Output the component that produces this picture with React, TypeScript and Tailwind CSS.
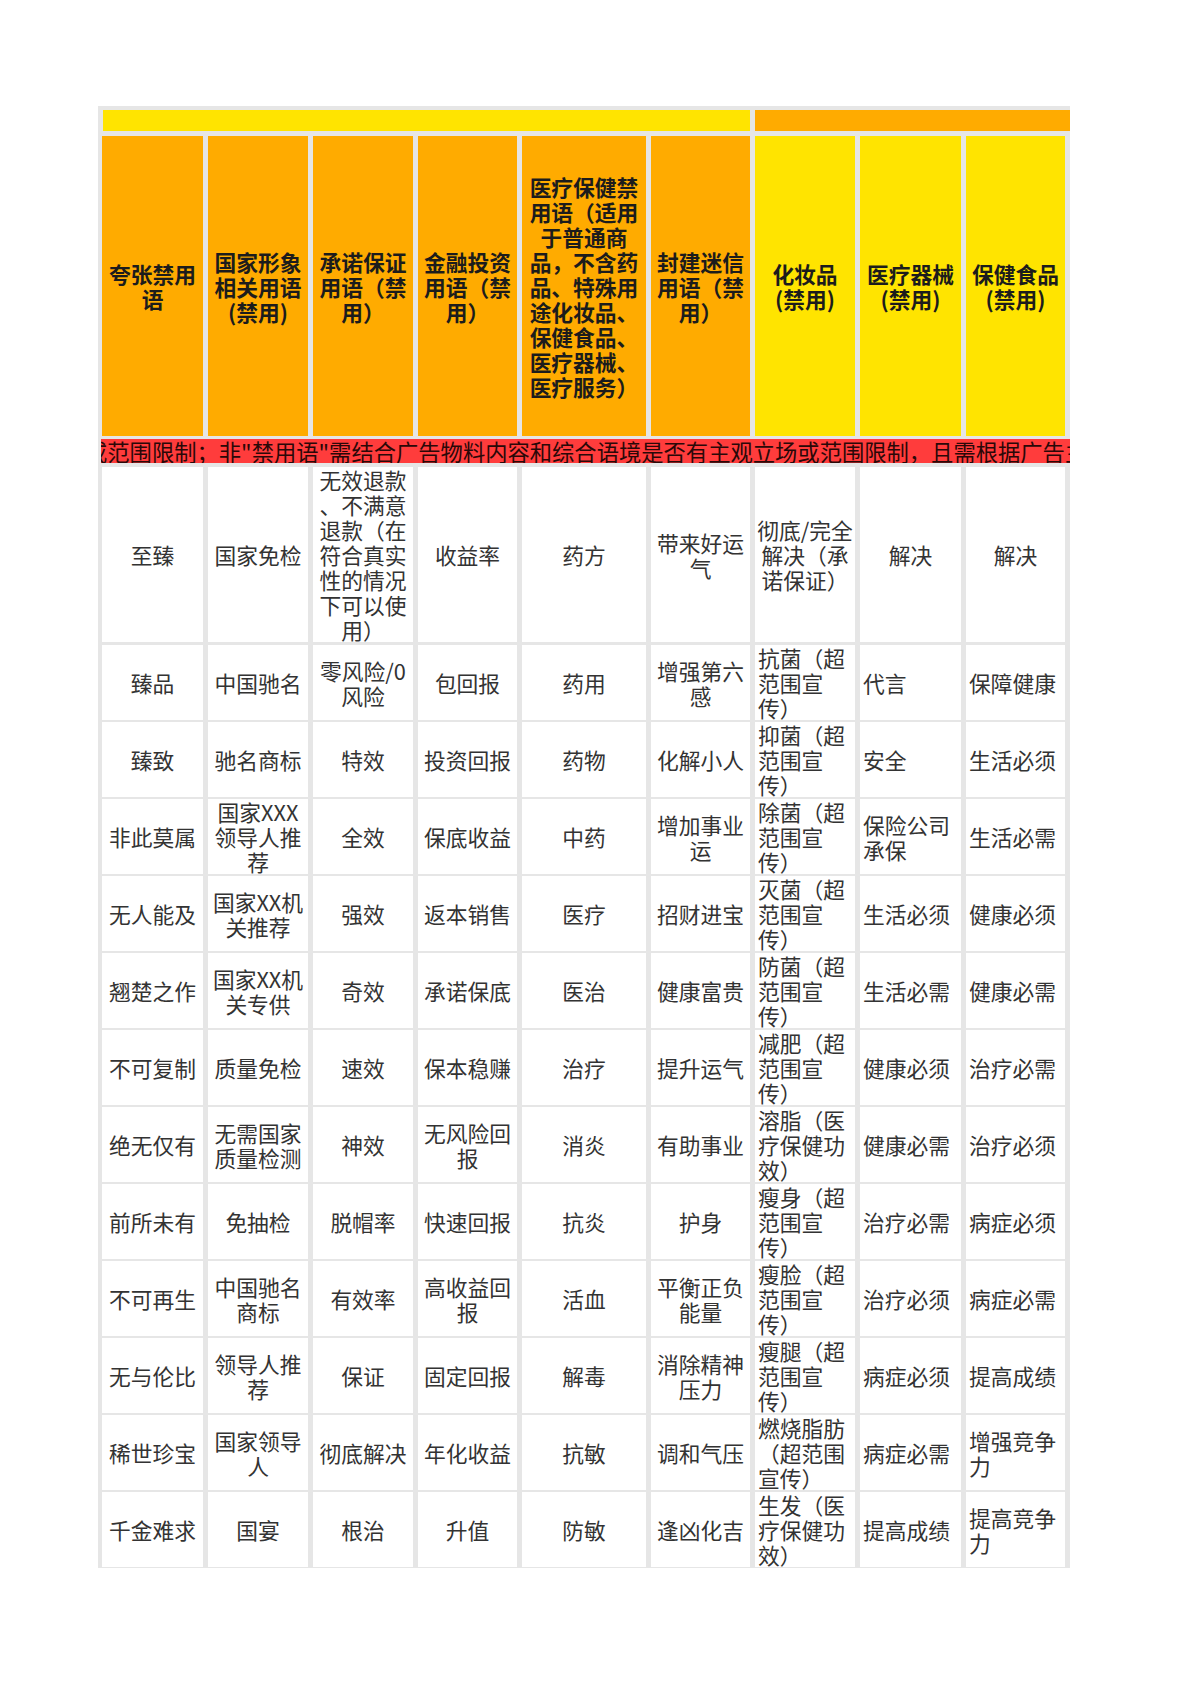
import React from 'react';

// shared column template: 9 columns with 5px gutters
const GRID = 'grid grid-cols-[101px_100px_100px_99px_124px_99px_100px_101px_99px] gap-x-[5px]';

type Tone = 'orange' | 'yellow';

const headers: { label: string; tone: Tone }[] = [
  { label: '夸张禁用\n语', tone: 'orange' },
  { label: '国家形象\n相关用语\n(禁用)', tone: 'orange' },
  { label: '承诺保证\n用语（禁\n用）', tone: 'orange' },
  { label: '金融投资\n用语（禁\n用）', tone: 'orange' },
  {
    label: '医疗保健禁\n用语（适用\n于普通商\n品，不含药\n品、特殊用\n途化妆品、\n保健食品、\n医疗器械、\n医疗服务）',
    tone: 'orange',
  },
  { label: '封建迷信\n用语（禁\n用）', tone: 'orange' },
  { label: '化妆品\n(禁用)', tone: 'yellow' },
  { label: '医疗器械\n(禁用)', tone: 'yellow' },
  { label: '保健食品\n(禁用)', tone: 'yellow' },
];

const rows: string[][] = [
  ['至臻', '国家免检', '无效退款\n、不满意\n退款（在\n符合真实\n性的情况\n下可以使\n用）', '收益率', '药方', '带来好运\n气', '彻底/完全\n解决（承\n诺保证）', '解决', '解决'],
  ['臻品', '中国驰名', '零风险/0\n风险', '包回报', '药用', '增强第六\n感', '抗菌（超\n范围宣\n传）', '代言', '保障健康'],
  ['臻致', '驰名商标', '特效', '投资回报', '药物', '化解小人', '抑菌（超\n范围宣\n传）', '安全', '生活必须'],
  ['非此莫属', '国家XXX\n领导人推\n荐', '全效', '保底收益', '中药', '增加事业\n运', '除菌（超\n范围宣\n传）', '保险公司\n承保', '生活必需'],
  ['无人能及', '国家XX机\n关推荐', '强效', '返本销售', '医疗', '招财进宝', '灭菌（超\n范围宣\n传）', '生活必须', '健康必须'],
  ['翘楚之作', '国家XX机\n关专供', '奇效', '承诺保底', '医治', '健康富贵', '防菌（超\n范围宣\n传）', '生活必需', '健康必需'],
  ['不可复制', '质量免检', '速效', '保本稳赚', '治疗', '提升运气', '减肥（超\n范围宣\n传）', '健康必须', '治疗必需'],
  ['绝无仅有', '无需国家\n质量检测', '神效', '无风险回\n报', '消炎', '有助事业', '溶脂（医\n疗保健功\n效）', '健康必需', '治疗必须'],
  ['前所未有', '免抽检', '脱帽率', '快速回报', '抗炎', '护身', '瘦身（超\n范围宣\n传）', '治疗必需', '病症必须'],
  ['不可再生', '中国驰名\n商标', '有效率', '高收益回\n报', '活血', '平衡正负\n能量', '瘦脸（超\n范围宣\n传）', '治疗必须', '病症必需'],
  ['无与伦比', '领导人推\n荐', '保证', '固定回报', '解毒', '消除精神\n压力', '瘦腿（超\n范围宣\n传）', '病症必须', '提高成绩'],
  ['稀世珍宝', '国家领导\n人', '彻底解决', '年化收益', '抗敏', '调和气压', '燃烧脂肪\n（超范围\n宣传）', '病症必需', '增强竞争\n力'],
  ['千金难求', '国宴', '根治', '升值', '防敏', '逢凶化吉', '生发（医\n疗保健功\n效）', '提高成绩', '提高竞争\n力'],
];

const notice =
  '或范围限制；非"禁用语"需结合广告物料内容和综合语境是否有主观立场或范围限制，且需根据广告主所属行业及宣传内容综合判断';

const App: React.FC = () => {
  return (
    <div className="min-h-[1698px] bg-white pt-[106px] pl-[98px] font-['Noto_Sans_CJK_SC','Liberation_Sans',sans-serif] text-[21.75px] leading-[25px] [text-spacing-trim:space-all]">
      <div className="w-[972px] bg-[#e6e6e6] pt-[4px] pl-[4px] pr-[5px] pb-[4px]">
        {/* category bar */}
        <div className={`${GRID} h-[21px]`}>
          <div className="col-span-6 ml-[1px] bg-[#ffe400]" />
          <div className="col-span-3 mr-[-5px] bg-[#ffab00]" />
        </div>

        {/* column headers */}
        <div className={`${GRID} mt-[5px] h-[300px]`}>
          {headers.map((h, i) => (
            <div
              key={i}
              className={`flex items-center justify-center px-[2px] text-center font-bold text-[#1c1c1c] ${
                h.tone === 'orange' ? 'bg-[#ffab00]' : 'bg-[#ffe400]'
              }`}
            >
              <span className="whitespace-pre">{h.label}</span>
            </div>
          ))}
        </div>

        {/* notice strip */}
        <div className="mt-[3px] ml-[-1px] mr-[-5px] h-[24px] overflow-hidden whitespace-nowrap bg-[#ff3c3c] text-[22.3px] leading-[24px] text-[#2a0808]">
          <span className="ml-[-16px] inline-block">{notice}</span>
        </div>

        {/* word list */}
        <div className="mt-[4px] flex flex-col gap-[5px]">
          {rows.map((row, r) => (
            <div key={r} className={`${GRID} ${r === 0 ? 'h-[173px]' : 'h-[72px]'}`}>
              {row.map((text, c) => {
                const left = r > 0 && c >= 6;
                return (
                  <div
                    key={c}
                    className={`flex items-center bg-white text-[#333] ${
                      left ? 'justify-start pl-[3px] text-left' : 'justify-center px-[2px] text-center'
                    }`}
                  >
                    <span className="whitespace-pre">{text}</span>
                  </div>
                );
              })}
            </div>
          ))}
        </div>
      </div>
    </div>
  );
};

export default App;
